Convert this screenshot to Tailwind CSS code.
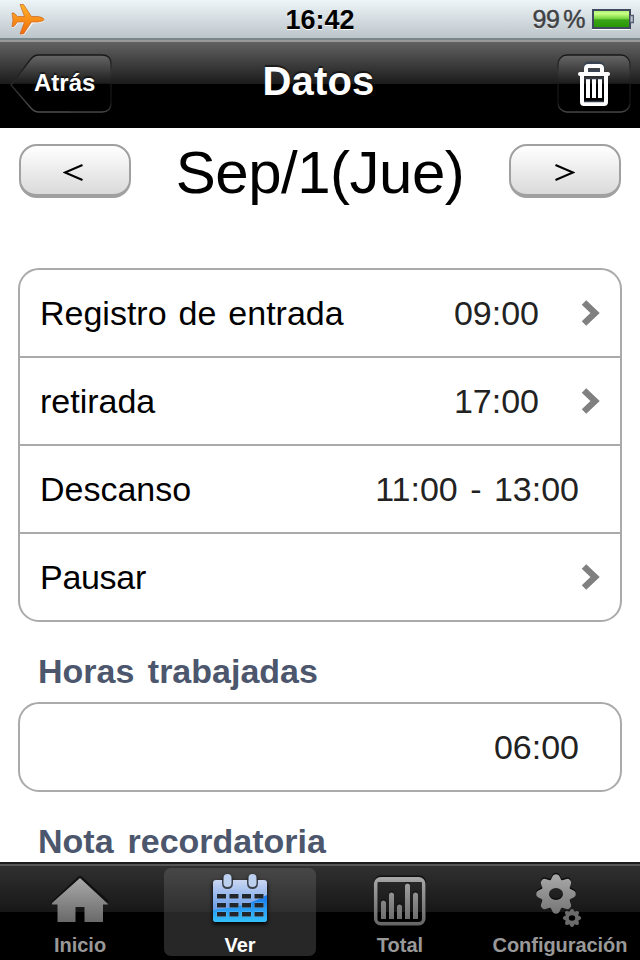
<!DOCTYPE html>
<html lang="es">
<head>
<meta charset="utf-8">
<title>Datos</title>
<script src="https://cdn.jsdelivr.net/npm/@tailwindcss/browser@4"></script>
</head>
<body class="w-[640px] h-[960px] overflow-hidden bg-white text-black font-['Liberation_Sans',Arial,sans-serif] flex flex-col">
<header class="shrink-0">
  <div class="h-10 grid grid-cols-3 items-center bg-linear-to-b from-[#edf5f9] to-[#bcc5c9] border-b-2 border-[#79878b]">
    <svg class="ml-[11px] mt-px w-[34px] h-[32px]" viewBox="0 0 34 32">
      <defs><linearGradient id="plane" x2="0" y2="1"><stop stop-color="#ffb429"/><stop offset="1" stop-color="#f26b09"/></linearGradient></defs>
      <path d="M1 9.500H3.500L7.500 14H15L9 .5H13L22 13H28Q33 13.500 33 15.500Q33 17 28 18L22 18.500L13 30H9.500L14 18.500L7.500 18L3.500 22.500H1L2.500 16Z" transform="translate(0 1)" fill="#fff" opacity=".8"/>
      <path d="M1 9H3L6.500 12.500H13.500L9 .5H12.500L20.500 12.500H27Q33 13.500 33 15.500Q33 17 27 18H20.500L12.500 30H9L13.500 18H6.500L3 22.500H1L2 16Z" fill="url(#plane)" stroke="#c86622" stroke-width=".7"/>
    </svg>
    <span class="text-center font-bold text-[27px] leading-8 pt-0.5 [text-shadow:0_1px_0_#fff]">16:42</span>
    <div class="flex items-center justify-end pr-[6px]">
      <span class="text-[25px] leading-8 text-[#404244] tracking-[-0.4px] [-webkit-text-stroke:0.5px_#404244] [text-shadow:0_1px_0_#fff] [word-spacing:-3px]">99 %</span>
      <svg class="ml-[7px] -mt-px w-[42px] h-[22px]" viewBox="0 0 42 22">
        <defs><linearGradient id="bat" x2="0" y2="1"><stop stop-color="#a4ee6b"/><stop offset=".2" stop-color="#caff87"/><stop offset=".48" stop-color="#77d43d"/><stop offset=".55" stop-color="#3ba318"/><stop offset="1" stop-color="#249800"/></linearGradient></defs>
        <path d="M0 21.500H38" stroke="#fff"/><rect x="1" y="2" width="37" height="18" fill="url(#bat)" stroke="#414961" stroke-width="2"/>
        <path d="M38.500 7.500H41.500V14.500H38.500" fill="#bcc5cf" stroke="#555d72" stroke-width="1.500"/>
      </svg>
    </div>
  </div>
  <nav class="h-[88px] border-t-2 border-[#999] bg-[linear-gradient(#626262_0,#1b1b1b_42px,#000_42px)] grid grid-cols-3">
    <div class="relative ml-[10px] mt-3 w-[103px] h-[60px]">
      <svg class="block w-full h-full" viewBox="0 0 103 60">
        <defs>
          <linearGradient id="btn" gradientUnits="userSpaceOnUse" x1="0" y1="0" x2="0" y2="60"><stop stop-color="#6a6a6a"/><stop offset=".49" stop-color="#1c1c1c"/><stop offset=".5" stop-color="#000"/></linearGradient>
          <linearGradient id="rim" gradientUnits="userSpaceOnUse" x1="0" y1="0" x2="0" y2="60"><stop stop-color="#161616"/><stop offset=".3" stop-color="#222"/><stop offset=".5" stop-color="#282828"/><stop offset="1" stop-color="#505050"/></linearGradient>
          <linearGradient id="side" gradientUnits="userSpaceOnUse" x1="0" y1="0" x2="0" y2="60"><stop stop-color="#161616"/><stop offset=".3" stop-color="#333"/><stop offset=".52" stop-color="#161616"/><stop offset=".8" stop-color="#111"/><stop offset="1" stop-color="#505050"/></linearGradient>
        </defs>
        <path d="M1 31L20 6Q23.500 1 29 1H92Q101 1 101 10V49Q101 58 92 58H29Q24 58 20 53Z" fill="url(#btn)"/>
        <path d="M60 58H29Q24 58 20 53L1 31L20 6Q23.500 1 29 1H60" fill="none" stroke="url(#rim)" stroke-width="1.400"/>
        <path d="M60 1H92Q101 1 101 10V49Q101 58 92 58H60" fill="none" stroke="url(#side)" stroke-width="1.400"/>
      </svg>
      <span class="absolute left-[24px] top-[14px] text-white font-bold text-[24px] leading-[30px] [text-shadow:0_-2px_1px_#0008]">Atrás</span>
    </div>
    <h1 class="text-center text-white font-bold text-[40px] leading-[46px] pt-4 pr-[3px] tracking-[0.2px] [text-shadow:0_-2px_1px_#0008]">Datos</h1>
    <svg class="justify-self-end mr-[9px] mt-3 w-[74px] h-[60px]" viewBox="0 0 74 60">
      <rect x="1" y="1" width="72" height="57" rx="9" fill="url(#btn)" stroke="url(#side)" stroke-width="1.400"/>
      <g fill="none" stroke-linejoin="round">
        <path d="M28 17V13Q28 9 32 9H42Q46 9 46 13V17" stroke="#394352" stroke-width="3"/>
        <path d="M30 17H44" stroke="#394352" stroke-width="3"/>
        <path d="M29 19V14.500Q29 12 31.500 12H42.500Q45 12 45 14.500V19" stroke="#fff" stroke-width="4"/>
        <path d="M23 20H51" stroke="#fff" stroke-width="4" stroke-linecap="round"/>
        <path d="M25 20V48Q25 50 27 50H47Q49 50 49 48V20" stroke="#fff" stroke-width="4"/>
        <path d="M31 25V44M37 25V44M43 25V44" stroke="#fff" stroke-width="4"/>
        <path d="M27 24.500H47M27 47.500H47" stroke="#343c49" stroke-width="1.500"/>
      </g>
    </svg>
  </nav>
</header>
<main class="h-[734px] shrink-0 overflow-hidden px-[18px]">
  <div class="h-[140px] pt-4 flex items-start justify-between">
    <button class="ml-px w-28 h-[54px] rounded-[18px] border-2 border-b-[4px] border-[#a0a0a0] bg-linear-to-b from-white to-[#dadada] flex items-center justify-center" aria-label="Anterior">
      <svg class="mt-[4px] mr-[4px] w-5 h-[17px]" viewBox="0 0 20 17" fill="none" stroke="#000" stroke-width="2"><path d="M19.500 1L2 8.500L19.500 16"/></svg>
    </button>
    <h2 class="text-[60px] leading-[60px] tracking-[-0.5px] -mt-px">Sep/1(Jue)</h2>
    <button class="mr-px w-28 h-[54px] rounded-[18px] border-2 border-b-[4px] border-[#a0a0a0] bg-linear-to-b from-white to-[#dadada] flex items-center justify-center" aria-label="Siguiente">
      <svg class="mt-[4px] w-5 h-[17px]" viewBox="0 0 20 17" fill="none" stroke="#000" stroke-width="2"><path d="M.5 1L18 8.500L.5 16"/></svg>
    </button>
  </div>
  <section class="border-2 border-[#aaa] rounded-[21px] divide-y-2 divide-[#aaa] text-[34px] leading-[40px] [word-spacing:2.5px]">
    <div class="h-[88px] pl-5 pr-[20px] flex items-center"><span class="flex-1">Registro de entrada</span><span class="text-[#222]">09:00</span><svg class="ml-[42px] w-[19px] h-[26px]" viewBox="0 0 19 26"><path d="M3 2.500L14 13L3 23.500" fill="none" stroke="#808080" stroke-width="6.500"/></svg></div>
    <div class="h-[88px] pl-5 pr-[20px] flex items-center"><span class="flex-1">retirada</span><span class="text-[#222]">17:00</span><svg class="ml-[42px] w-[19px] h-[26px]" viewBox="0 0 19 26"><path d="M3 2.500L14 13L3 23.500" fill="none" stroke="#808080" stroke-width="6.500"/></svg></div>
    <div class="h-[88px] pl-5 pr-[41px] flex items-center"><span class="flex-1">Descanso</span><span class="text-[#222] [word-spacing:3px]">11:00 - 13:00</span></div>
    <div class="h-[86px] pl-5 pr-[20px] flex items-center"><span class="flex-1 tracking-[-0.3px]">Pausar</span><svg class="w-[19px] h-[26px]" viewBox="0 0 19 26"><path d="M3 2.500L14 13L3 23.500" fill="none" stroke="#808080" stroke-width="6.500"/></svg></div>
  </section>
  <h3 class="h-20 pt-[29px] pl-5 text-[34px] leading-[40px] font-bold text-[#4c566c] [word-spacing:4px]">Horas trabajadas</h3>
  <section class="h-[90px] border-2 border-[#aaa] rounded-[21px] pr-[41px] flex items-center justify-end text-[34px] text-[#222]">06:00</section>
  <h3 class="pt-[29px] pl-5 text-[34px] leading-[40px] font-bold text-[#4c566c] [word-spacing:4.5px]">Nota recordatoria</h3>
</main>
<footer class="h-[98px] shrink-0 border-t-2 border-[#1c1c1c] bg-[linear-gradient(#555_0,#555_2px,#303030_2px,#171717_48px,#000_48px)] grid grid-cols-4 text-[#999] text-[20px] leading-6 font-bold text-center">
  <a class="pt-1 px-1"><div class="h-[88px] flex flex-col items-center">
    <svg class="shrink-0 mt-2 w-[60px] h-[50px]" viewBox="0 0 60 50"><defs><linearGradient id="gray" x2="0" y2="1"><stop stop-color="#aaa"/><stop offset="1" stop-color="#696969"/></linearGradient></defs><path d="M2 27L30 1L58 26" fill="none" stroke="#111" stroke-width="3"/><path d="M30 2L58 28V28.500H53V46H34.500V31H25.500V46H7.500V28.500H2V27Z" fill="url(#gray)"/></svg>
    <span class="mt-[7px]">Inicio</span></div></a>
  <a class="pt-1 px-1 text-white"><div class="h-[88px] rounded-[7px] bg-[linear-gradient(#474747,#2f2f2f_44px,#272727_44px,#272727)] flex flex-col items-center">
    <svg class="shrink-0 mt-[5px] w-[60px] h-[54px] drop-shadow-[0_2px_2px_#000]" viewBox="0 0 60 54">
      <defs><linearGradient id="sky" x2="0" y2="1"><stop stop-color="#cad7f2"/><stop offset=".6" stop-color="#75a2ea"/><stop offset="1" stop-color="#4d93ed"/></linearGradient><linearGradient id="sea" gradientUnits="userSpaceOnUse" x1="0" y1="22" x2="0" y2="50"><stop stop-color="#1874ee"/><stop offset="1" stop-color="#36c3fb"/></linearGradient></defs>
      <rect x="3" y="7" width="54" height="42" rx="3" fill="url(#sky)"/>
      <path d="M3 37Q36 34 57 22V46Q57 49 54 49H6Q3 49 3 46Z" fill="url(#sea)"/>
      <path fill="#22252a" stroke="#a5d4f5" stroke-opacity=".45" stroke-width="1" paint-order="stroke" d="M7 21H16V25.500H7ZM19.500 21H28.500V25.500H19.500ZM32 21H41V25.500H32ZM44.500 21H53.500V25.500H44.500ZM7 30H16V34.500H7ZM19.500 30H28.500V34.500H19.500ZM32 30H41V34.500H32ZM44.500 30H53.500V34.500H44.500ZM7 39H16V43.500H7ZM19.500 39H28.500V43.500H19.500ZM32 39H41V43.500H32ZM44.500 39H53.500V43.500H44.500Z"/>
      <path d="M12 7V10Q12 16 17.500 16T23 10V7ZM37 7V10Q37 16 42.500 16T48 10V7Z" fill="#3c424c"/>
      <rect x="13.500" y="1" width="8" height="13" rx="4" fill="#bcd0ef"/><rect x="38.500" y="1" width="8" height="13" rx="4" fill="#bcd0ef"/>
    </svg>
    <span class="mt-[6px]">Ver</span></div></a>
  <a class="pt-1 px-1"><div class="h-[88px] flex flex-col items-center">
    <svg class="shrink-0 mt-[5px] w-[56px] h-[54px]" viewBox="0 0 56 54"><defs><linearGradient id="bars" gradientUnits="userSpaceOnUse" x1="0" y1="3" x2="0" y2="52"><stop stop-color="#aaa"/><stop offset="1" stop-color="#656565"/></linearGradient></defs>
      <rect x="3.500" y="4" width="49" height="46" rx="5" fill="none" stroke="#111" stroke-width="3"/><rect x="3.700" y="5.700" width="48" height="45" rx="5" fill="none" stroke="url(#bars)" stroke-width="3.500"/><path d="M6 8H50" stroke="#a0a0a0" stroke-width="2"/>
      <g fill="#111" transform="translate(0 -1.500)"><path d="M9 46V30a2.500 2.500 0 0 1 5 0V46ZM17 46V22a2.500 2.500 0 0 1 5 0V46ZM25 46V34a2.500 2.500 0 0 1 5 0V46ZM33 46V13a2.500 2.500 0 0 1 5 0V46ZM41 46V22a2.500 2.500 0 0 1 5 0V46Z"/></g>
      <path fill="url(#bars)" d="M9 46V30a2.500 2.500 0 0 1 5 0V46ZM17 46V22a2.500 2.500 0 0 1 5 0V46ZM25 46V34a2.500 2.500 0 0 1 5 0V46ZM33 46V13a2.500 2.500 0 0 1 5 0V46ZM41 46V22a2.500 2.500 0 0 1 5 0V46Z"/>
    </svg>
    <span class="mt-[6px]">Total</span></div></a>
  <a class="pt-1"><div class="h-[88px] flex flex-col items-center">
    <svg class="shrink-0 mt-1 w-[50px] h-[58px]" viewBox="0 0 50 58">
      <defs>
        <mask id="gear" maskUnits="userSpaceOnUse" x="-25" y="-25" width="50" height="50">
          <circle r="14.800" fill="#fff"/>
          <g fill="#fff"><path id="tooth" d="M-5.500 -13.500L-3.300 -18Q-2.500 -19.800 0 -19.800T3.300 -18L5.500 -13.500L5.500 13.500L3.300 18Q2.500 19.800 0 19.800T-3.300 18L-5.500 13.500Z"/><use href="#tooth" transform="rotate(45)"/><use href="#tooth" transform="rotate(90)"/><use href="#tooth" transform="rotate(135)"/></g>
          <ellipse rx="7" ry="6" fill="#000"/>
        </mask>
        <linearGradient id="g1" gradientUnits="userSpaceOnUse" x1="0" y1="-20" x2="0" y2="20"><stop stop-color="#aaa"/><stop offset="1" stop-color="#757575"/></linearGradient>
      </defs>
      <g transform="translate(21 20.500)"><rect x="-21" y="-21" width="42" height="42" fill="#0b0b0b" mask="url(#gear)"/></g>
      <g transform="translate(21 22)"><rect x="-21" y="-21" width="42" height="42" fill="url(#g1)" mask="url(#gear)"/></g>
      <g transform="translate(37 46) scale(.46)"><rect x="-21" y="-21" width="42" height="42" fill="#6b6b6b" mask="url(#gear)"/></g>
    </svg>
    <span class="mt-[3px] whitespace-nowrap tracking-[-0.05px]">Configuración</span></div></a>
</footer>
</body>
</html>
